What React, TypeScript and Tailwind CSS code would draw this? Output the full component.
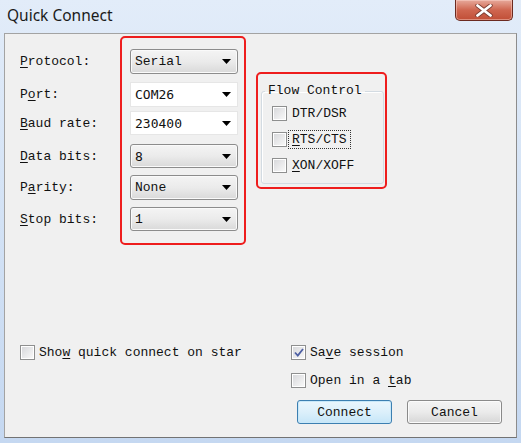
import React from "react";

const mono = "font-['Liberation_Mono',monospace]";
const smono = "font-['DejaVu_Sans_Mono',monospace]";

function Arrow() {
  return (
    <svg width="9" height="5" viewBox="0 0 9 5" className="shrink-0">
      <path d="M0 0H9L4.5 5Z" fill="#000" />
    </svg>
  );
}

function Combo({
  value,
  gray,
  sans,
  mt,
  h,
}: {
  value: string;
  gray: boolean;
  sans?: boolean;
  mt: number;
  h: number;
}) {
  return (
    <div
      style={{ marginTop: mt, height: h }}
      className={
        "flex items-center justify-between pl-[4px] pr-[6px] " +
        (gray
          ? "rounded-[3px] border border-[#8c8c8c] bg-gradient-to-b from-[#f4f4f4] via-[#ebebeb] to-[#d9d9d9] shadow-[inset_0_0_0_1px_#fafafa]"
          : "border border-[#e6e6e6] bg-white")
      }
    >
      <span className={(sans ? smono : mono) + " text-[13px] leading-none text-[#111]"}>{value}</span>
      <Arrow />
    </div>
  );
}

function Check({ checked }: { checked?: boolean }) {
  return (
    <div className="w-[15px] h-[15px] shrink-0 border border-[#8e8f8f] bg-white p-[1px]">
      <div className="w-full h-full bg-gradient-to-br from-[#d8d9dc] to-[#f8f8f8] flex items-center justify-center">
        {checked && (
          <svg width="10" height="9" viewBox="0 0 10 9">
            <path d="M1 4.5L3.8 7.5L9 1" fill="none" stroke="#4d5fa3" strokeWidth="1.8" />
          </svg>
        )}
      </div>
    </div>
  );
}

const U = ({ children }: { children: React.ReactNode }) => (
  <span className="underline underline-offset-[2px] decoration-1">{children}</span>
);

const rows: { label: React.ReactNode; value: string; gray: boolean; sans?: boolean; mt: number; h: number }[] = [
  { label: <><U>P</U>rotocol:</>, value: "Serial", gray: true, mt: 11, h: 25 },
  { label: <>P<U>o</U>rt:</>, value: "COM26", gray: false, sans: true, mt: 8, h: 25 },
  { label: <><U>B</U>aud rate:</>, value: "230400", gray: false, sans: true, mt: 4, h: 24 },
  { label: <><U>D</U>ata bits:</>, value: "8", gray: true, sans: true, mt: 9, h: 24 },
  { label: <>P<U>a</U>rity:</>, value: "None", gray: true, mt: 7, h: 25 },
  { label: <><U>S</U>top bits:</>, value: "1", gray: true, mt: 7, h: 24 },
];

function Button({ children, primary }: { children: React.ReactNode; primary?: boolean }) {
  return (
    <div
      className={
        "h-[24px] w-[95px] rounded-[3px] flex items-center justify-center border " +
        (primary
          ? "border-[#3c7fb1] bg-gradient-to-b from-[#eaf6fd] via-[#dcf0fb] to-[#c6e6f8] shadow-[inset_0_0_0_1px_#c8e8f9]"
          : "border-[#8a8a8a] bg-gradient-to-b from-[#f4f4f4] via-[#ebebeb] to-[#d6d6d6] shadow-[inset_0_0_0_1px_#fbfbfb]")
      }
    >
      <span className={mono + " text-[13px] leading-none text-[#111]"}>{children}</span>
    </div>
  );
}

export default function App() {
  return (
    <div className="w-[521px] h-[443px] flex flex-col bg-gradient-to-b from-[#e2ecf9] via-[#d3e2f5] to-[#c5d8f1] overflow-hidden">
      {/* title bar */}
      <div className="h-[33px] flex justify-between items-start shrink-0">
        <div className="pl-[7px] pt-[5px] font-['Noto_Sans',sans-serif] text-[15.5px] leading-[20px] text-[#1b1b1b]">
          Quick Connect
        </div>
        <div className="mr-[8px] w-[58px] h-[21px] rounded-b-[5px] border border-t-0 border-[#6b2a20] bg-gradient-to-b from-[#e6a99b] via-[#cf6650] to-[#c04e36] shadow-[inset_0_0_0_1px_rgba(255,220,210,0.45)] flex items-center justify-center">
          <svg width="18" height="13" viewBox="0 0 18 13">
            <path d="M2.5 1.5L15.5 11.5M15.5 1.5L2.5 11.5" stroke="#7a3b30" strokeWidth="4.4" strokeLinecap="round" />
            <path d="M2.5 1.5L15.5 11.5M15.5 1.5L2.5 11.5" stroke="#ffffff" strokeWidth="2.8" strokeLinecap="round" />
          </svg>
        </div>
      </div>

      {/* panel */}
      <div className="mx-[4px] h-[405px] shrink-0 border border-[#a3a3a3] border-b-[#737373] border-r-[#8c8c8c] bg-[#f0f0f0] flex flex-col">
        <div className="flex items-start pt-[2px]">
          {/* labels */}
          <div className="ml-[15px] w-[100px] pt-[2px] pb-[14px] flex flex-col">
            {rows.map((r, i) => (
              <div
                key={i}
                style={{ marginTop: r.mt, height: r.h }}
                className={mono + " flex items-center text-[13px] leading-none text-[#111] whitespace-pre"}
              >
                {r.label}
              </div>
            ))}
          </div>
          {/* red box 1 */}
          <div className="w-[126px] border-2 border-[#ee1d1d] rounded-[5px] pl-[8px] pr-[6px] pb-[12px] flex flex-col">
            {rows.map((r, i) => (
              <Combo key={i} value={r.value} gray={r.gray} sans={r.sans} mt={r.mt} h={r.h} />
            ))}
          </div>
          {/* red box 2 */}
          <div className="ml-[10px] mt-[36px] w-[131px] h-[117px] border-2 border-[#ee1d1d] rounded-[5px] pl-[3px]">
            <fieldset className="mt-[9px] w-[123px] h-[101px] border border-[#d3dbe2] rounded-[3px] shadow-[inset_1px_1px_0_#ffffff]">
              <legend className={mono + " ml-[3px] px-[3px] text-[13px] leading-[16px] text-[#111]"}>Flow Control</legend>
              <div className="flex flex-col pl-[10px]">
                <div className="mt-[6px] h-[16px] flex items-center gap-[5px]">
                  <Check />
                  <span className={mono + " text-[13px] leading-none text-[#111]"}>DTR/DSR</span>
                </div>
                <div className="mt-[10px] h-[16px] flex items-center gap-[4px]">
                  <Check />
                  <span className={mono + " text-[13px] leading-none text-[#111] outline-1 outline-dotted outline-[#333] outline-offset-[2px] px-[1px]"}>
                    <U>R</U>TS/CTS
                  </span>
                </div>
                <div className="mt-[10px] h-[16px] flex items-center gap-[5px]">
                  <Check />
                  <span className={mono + " text-[13px] leading-none text-[#111]"}>
                    <U>X</U>ON/XOFF
                  </span>
                </div>
              </div>
            </fieldset>
          </div>
        </div>

        {/* bottom */}
        <div className="mt-[99px] pl-[15px] flex">
          <div className="w-[271px]">
            <div className="h-[16px] flex items-center gap-[4px]">
              <Check />
              <span className={mono + " text-[13px] leading-none text-[#111] whitespace-pre"}>
                Sho<U>w</U> quick connect on star
              </span>
            </div>
          </div>
          <div className="flex flex-col">
            <div className="h-[16px] flex items-center gap-[4px]">
              <Check checked />
              <span className={mono + " text-[13px] leading-none text-[#111] whitespace-pre"}>
                Sa<U>v</U>e session
              </span>
            </div>
            <div className="mt-[12px] h-[16px] flex items-center gap-[4px]">
              <Check />
              <span className={mono + " text-[13px] leading-none text-[#111] whitespace-pre"}>
                Open in a <U>t</U>ab
              </span>
            </div>
            <div className="mt-[12px] ml-[6px] flex gap-[15px]">
              <Button primary>Connect</Button>
              <Button>Cancel</Button>
            </div>
          </div>
        </div>
      </div>
    </div>
  );
}
